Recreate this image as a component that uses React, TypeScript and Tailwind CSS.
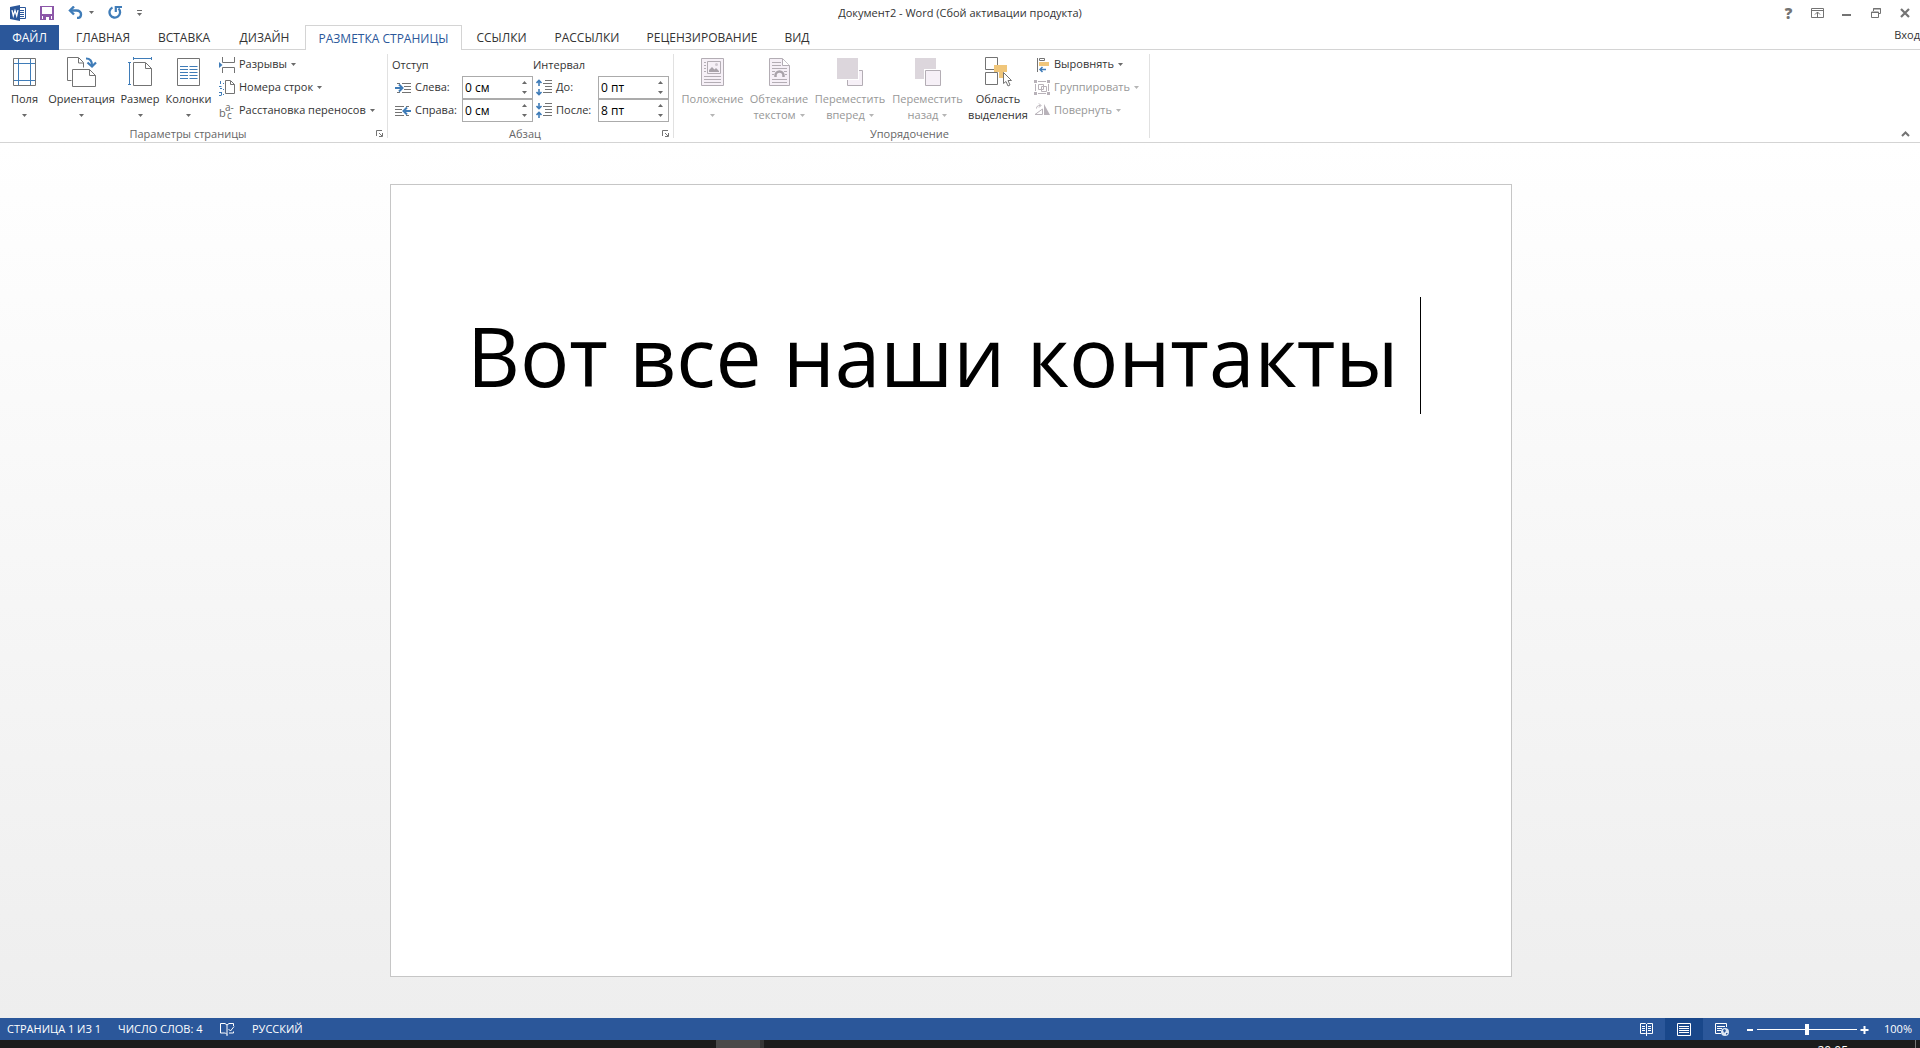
import React from "react";

type P = { children?: React.ReactNode };

const G = "#737373";
const B = "#3f7cb8";

function Svg({ w, h, children }: P & { w: number; h: number }) {
  return (
    <svg width={w} height={h} viewBox={`0 0 ${w} ${h}`} fill="none" aria-hidden="true" className="shrink-0">
      {children}
    </svg>
  );
}

function Caret({ dim = false }: { dim?: boolean }) {
  return (
    <Svg w={5} h={3}>
      <path d="M0 0h5L2.5 3z" fill={dim ? "#b5b5b5" : "#6a6a6a"} />
    </Svg>
  );
}

/* ---------- Quick access and window icons ---------- */

const WordLogo = () => (
  <Svg w={16} h={16}>
    <path d="M9 2.5h6.500v11H9z" fill="#fff" stroke="#2b579a" />
    <path d="M10 5.500h4M10 7.500h4M10 9.500h4M10 11.500h4" stroke="#2b579a" />
    <path d="M0 2l10-2v16L0 14z" fill="#2b579a" />
    <path d="M2 5.200l1.300 5.600L5 5.600l1.700 5.200L8 5.200" stroke="#fff" strokeWidth="1.300" />
  </Svg>
);
const Save = () => (
  <Svg w={14} h={14}>
    <path d="M0 0h14v14H0z" fill="#8c57a8" />
    <path d="M2 1h10v7H2zM2 10h1v3H2zM11 10h1v3h-1zM6 11h3v3H6z" fill="#fff" />
  </Svg>
);
const Undo = () => (
  <Svg w={15} h={13}>
    <path d="M2 4.500h6.500c3 0 4.500 1.600 4.500 3.700S11.500 12 9 12" stroke={B} strokeWidth="2.400" />
    <path d="M6 0.500L2 4.500l4 4" stroke={B} strokeWidth="2.400" />
  </Svg>
);
const Redo = () => (
  <Svg w={14} h={13}>
    <path d="M4.500 1.500A5.300 5.300 0 1 0 10.500 2.500" stroke={B} strokeWidth="2.300" />
    <path d="M7.800 6V1H14" stroke={B} strokeWidth="2.200" />
  </Svg>
);
const Customize = () => (
  <Svg w={5} h={6}>
    <path d="M0 .5h5" stroke="#6a6a6a" />
    <path d="M0 3h5L2.500 6z" fill="#6a6a6a" />
  </Svg>
);
const RibbonOptions = () => (
  <Svg w={13} h={10}>
    <path d="M.5.5h12v9H.5zM1 2.500h11M6.500 9V4M4 6.500L6.500 4 9 6.500" stroke={G} />
  </Svg>
);
const Minimize = () => (
  <Svg w={9} h={10}>
    <path d="M0 7h9" stroke={G} strokeWidth="2" />
  </Svg>
);
const Restore = () => (
  <Svg w={10} h={10}>
    <path d="M2.500 3V.5h7v5H7M2 1h8M.5 4h7v5.500h-7zM0 4.500h8" stroke={G} />
  </Svg>
);
const Close = () => (
  <Svg w={10} h={10}>
    <path d="M1 1l8 8M9 1L1 9" stroke={G} strokeWidth="2.200" />
  </Svg>
);
const Launcher = () => (
  <Svg w={7} h={7}>
    <path d="M.5 6V.5H6M3 3l3 3M6.500 3v3.500H3" stroke={G} />
  </Svg>
);

/* ---------- Large ribbon icons ---------- */

const Margins = () => (
  <Svg w={23} h={30}>
    <path d="M.5 1.500h22v27H.5z" stroke={G} />
    <path d="M5.500 2v26M17.500 2v26M1 6.500h21M1 23.500h21" stroke={B} />
  </Svg>
);
const Orientation = () => (
  <Svg w={30} h={30}>
    <path d="M4.500 23.500h-4V.5h11l5 5v5M11.500 1v5h5" stroke={G} />
    <path d="M5.500 12.500h17l6 6v11h-23z" fill="#fff" stroke={G} />
    <path d="M22.500 12.500v6h6" stroke={G} />
    <path d="M19 1.500c4 0 6 2 6 7" stroke={B} strokeWidth="2.200" />
    <path d="M20.500 5.500L25 9.500l4-4" stroke={B} strokeWidth="2.200" />
  </Svg>
);
const Size = () => (
  <Svg w={24} h={30}>
    <path d="M5.500 5.500h12l6 6v17h-18zM17.500 6v5.500h6" stroke={G} />
    <path d="M5 1.500h19M5.500 0v3M23.500 0v3M1.500 5v23M0 5.500h3M0 27.500h3" stroke={B} />
  </Svg>
);
const Columns = () => (
  <Svg w={23} h={30}>
    <path d="M.5 1.500h22v27H.5z" stroke={G} />
    <path d="M3 9.500h8M3 12.500h8M3 15.500h8M3 18.500h8M3 21.500h8M12.500 9.500h8M12.500 12.500h8M12.500 15.500h8M12.500 18.500h8M12.500 21.500h8" stroke={B} />
  </Svg>
);
const Position = () => (
  <Svg w={23} h={30}>
    <path d="M.5 1.500h22v27H.5z" fill="#f6f0f7" stroke="#b3adb4" />
    <path d="M6.500 4.500h13v12h-13z" stroke="#b3adb4" />
    <path d="M8 15v-2l3-3 2.500 2.500L15 11l3 3v1z" fill="#a9a3aa" />
    <circle cx="15.500" cy="7.500" r="1.500" fill="#cfc8d0" />
    <path d="M3 5.500h2M3 8.500h2M3 11.500h2M3 14.500h2M3 19.500h17M3 22.500h17M3 25.500h17" stroke="#b3adb4" />
  </Svg>
);
const Wrap = () => (
  <Svg w={21} h={30}>
    <path d="M.5 1.500h13l7 7v20H.5z" fill="#f6f0f7" stroke="#b3adb4" />
    <path d="M13.500 2v6.500h7" fill="#fff" stroke="#b3adb4" />
    <path d="M3 5.500h9M3 8.500h9M3 11.500h15M3 14.500h3M15 14.500h3M3 17.500h2M16 17.500h2M3 22.500h15M3 25.500h15" stroke="#b3adb4" />
    <path d="M6.500 20v-1.500a4 4 0 0 1 8 0V20" stroke="#a9a3aa" strokeWidth="2.500" />
  </Svg>
);
const Forward = () => (
  <Svg w={26} h={30}>
    <path d="M10.500 13.500h15v15h-15z" fill="#f6f0f7" stroke="#b3adb4" />
    <path d="M0 1h22v22H0z" fill="#fff" />
    <path d="M0 1h21v21H0z" fill="#dcd6dc" />
  </Svg>
);
const Backward = () => (
  <Svg w={26} h={30}>
    <path d="M0 1h21v21H0z" fill="#dcd6dc" />
    <path d="M9 12h17v17H9z" fill="#fff" />
    <path d="M10.500 13.500h15v15h-15z" fill="#f6f0f7" stroke="#b3adb4" />
  </Svg>
);
const Selection = () => (
  <Svg w={27} h={30}>
    <path d="M.5.5h12v12H.5zM.5 15.500h12v12H.5z" stroke={G} />
    <path d="M9 8h13v7h-3v6h-5v-6H9z" fill="#f0c67a" />
    <path d="M18.500 15.500v11l2.500-2 2 4.500 2-1-2-4.500h3.500z" fill="#fff" stroke={G} />
  </Svg>
);

/* ---------- Small ribbon icons ---------- */

const Breaks = () => (
  <Svg w={16} h={16}>
    <path d="M3.500 0v5.500h12V0M3.500 16v-5.500h12V16" stroke={G} />
    <path d="M0 5l3.500 3L0 11z" fill={B} />
  </Svg>
);
const LineNumbers = () => (
  <Svg w={16} h={16}>
    <path d="M6.500 2v11.500h9v-9l-4-4H6.500V2M11.500 1v3.500h4" stroke={G} />
    <path d="M1.500 1v3M0 6.500h2.500M1 8.500h2M0 12.500h2.500M0 15.500h2.500M2.500 12v3M4 3.500h1M4 9.500h1M4 14.500h1" stroke={B} />
  </Svg>
);
const Hyphenation = () => (
  <span aria-hidden="true" className="flex w-4 shrink-0 text-[#666]">
    <span className="w-[6px] pt-1 leading-3">b</span>
    <span className="flex flex-col text-[10px] leading-[8px]">
      <span>a-</span>
      <span>c</span>
    </span>
  </span>
);
const IndentLeft = () => (
  <Svg w={16} h={12}>
    <path d="M2 1.500h3M7 1.500h9M9 4.500h7M9 7.500h7M2 10.500h3M7 10.500h9" stroke={G} />
    <path d="M0 6h6M4 2.500L7.500 6 4 9.500" stroke={B} strokeWidth="2" />
  </Svg>
);
const IndentRight = () => (
  <Svg w={16} h={12}>
    <path d="M0 1.500h9M11 1.500h3M0 4.500h7M0 7.500h7M0 10.500h9M11 10.500h3" stroke={G} />
    <path d="M16 6h-6M12 2.500L8.500 6l3.500 3.500" stroke={B} strokeWidth="2" />
  </Svg>
);
const SpaceBefore = () => (
  <Svg w={16} h={17}>
    <path d="M9 1.500h7M7 4.500h9M9 7.500h7M9 10.500h7M7 13.500h9" stroke={G} />
    <path d="M3 7V2M.5 4L3 1.500 5.500 4M3 10v5M.5 13L3 15.500 5.500 13" stroke={B} strokeWidth="1.600" />
  </Svg>
);
const SpaceAfter = () => (
  <Svg w={16} h={17}>
    <path d="M9 1.500h7M7 4.500h9M9 7.500h7M9 10.500h7M7 13.500h9" stroke={G} />
    <path d="M3 1v5M.5 4L3 6.500 5.500 4M3 16v-5M.5 13L3 10.500 5.500 13" stroke={B} strokeWidth="1.600" />
  </Svg>
);
const Align = () => (
  <Svg w={16} h={16}>
    <path d="M3.500 1v14M5.500 1.500h5v2h-5z" stroke={G} />
    <path d="M5 5h10v4H5z" fill="#f0c67a" />
    <path d="M6 12.500h6M8.500 10L6 12.500 8.500 15" stroke={B} strokeWidth="1.500" />
  </Svg>
);
const Group = () => (
  <Svg w={16} h={16}>
    <path d="M0 0h3v3H0zM13 0h3v3h-3zM0 12h3v3H0zM13 12h3v3h-3z" fill="#b8b2b9" />
    <path d="M4 1.500h8M4 13.500h8M1.500 4v7M14.500 4v7M4.500 4.500h5v5h-5zM7.500 6.500h5v5h-5z" stroke="#b8b2b9" />
  </Svg>
);
const Rotate = () => (
  <Svg w={16} h={16}>
    <path d="M10 1v11h6z" fill="#b8b2b9" />
    <path d="M8.500 6v5.500H1zM2.500 5.500c0-2 1-3 4-3M5 .5l2 2L5 4.500" stroke="#b8b2b9" />
  </Svg>
);

/* ---------- Ribbon building blocks ---------- */

type BigProps = { icon: React.ReactNode; lines: string[]; width: string; caret?: boolean; disabled?: boolean };

function BigButton({ icon, lines, width, caret = true, disabled = false }: BigProps) {
  const last = lines.length - 1;
  return (
    <button
      type="button"
      disabled={disabled}
      className={`flex flex-col items-center pt-1 ${width} ${disabled ? "text-[#979797]" : "text-[#333]"}`}
    >
      {icon}
      <span className="mt-1 flex flex-col items-center leading-4 whitespace-nowrap">
        {lines.map((l, i) => (
          <span key={l} className="flex h-4 items-center gap-1">
            {l}
            {caret && last > 0 && i === last && <Caret dim={disabled} />}
          </span>
        ))}
        {caret && last === 0 && (
          <span className="flex h-4 items-center">
            <Caret dim={disabled} />
          </span>
        )}
      </span>
    </button>
  );
}

function SmallButton({ icon, label, disabled = false }: { icon: React.ReactNode; label: string; disabled?: boolean }) {
  return (
    <button
      type="button"
      disabled={disabled}
      className={`flex h-[23px] items-center gap-1 whitespace-nowrap ${disabled ? "text-[#979797]" : "text-[#333]"}`}
    >
      {icon}
      {label}
      <Caret dim={disabled} />
    </button>
  );
}

function Field({ id, icon, label, value, labelWidth }: { id: string; icon: React.ReactNode; label: string; value: string; labelWidth: string }) {
  return (
    <div className="flex h-[23px] items-center">
      <label htmlFor={id} className={`flex items-center gap-1 whitespace-nowrap ${labelWidth}`}>
        {icon}
        {label}
      </label>
      <div className="flex h-[23px] w-[71px] items-center border border-[#ababab] bg-white">
        <input id={id} defaultValue={value} className="w-full min-w-0 flex-1 pl-[2px] text-[12px] text-black outline-none" />
        <div className="flex w-4 flex-col items-center gap-[7px]">
          <button type="button" aria-label={`${label} больше`} className="rotate-180">
            <Caret />
          </button>
          <button type="button" aria-label={`${label} меньше`}>
            <Caret />
          </button>
        </div>
      </div>
    </div>
  );
}

function RibbonGroup({ title, launcher = false, width, children }: P & { title: string; launcher?: boolean; width: string }) {
  return (
    <section className={`flex shrink-0 ${width}`}>
      <div className="flex min-w-0 flex-1 flex-col">
        <div className="flex h-[75px] pt-[3px]">{children}</div>
        <div className="flex h-[17px] items-center pr-1">
          <h2 className="flex-1 text-center leading-4 text-[#666]">{title}</h2>
          {launcher && (
            <button type="button" aria-label={`${title}: параметры`}>
              <Launcher />
            </button>
          )}
        </div>
      </div>
      <div className="mt-1 mb-1 w-px bg-[#e1e1e1]" />
    </section>
  );
}

const tabs = [
  { label: "ГЛАВНАЯ", width: "w-[82px]" },
  { label: "ВСТАВКА", width: "w-20" },
  { label: "ДИЗАЙН", width: "w-[81px]" },
  { label: "РАЗМЕТКА СТРАНИЦЫ", width: "w-[157px]", active: true },
  { label: "ССЫЛКИ", width: "w-[79px]" },
  { label: "РАССЫЛКИ", width: "w-[92px]" },
  { label: "РЕЦЕНЗИРОВАНИЕ", width: "w-[138px]" },
  { label: "ВИД", width: "w-[52px]" },
];

const windowButtons = [
  { label: "Справка", icon: <span className="text-[15px] leading-4 font-extrabold">?</span> },
  { label: "Параметры отображения ленты", icon: <RibbonOptions /> },
  { label: "Свернуть", icon: <Minimize /> },
  { label: "Восстановить", icon: <Restore /> },
  { label: "Закрыть", icon: <Close /> },
];

export default function App() {
  return (
    <div className="flex min-h-screen flex-col overflow-hidden bg-white font-['Open_Sans','Noto_Sans',sans-serif] text-[11px] text-[#333]">
      <header className="grid h-[25px] grid-cols-[1fr_auto_1fr] items-center">
        <div className="flex items-center pl-[10px]">
          <WordLogo />
          <button type="button" aria-label="Сохранить" className="ml-[14px]"><Save /></button>
          <button type="button" aria-label="Отменить" className="ml-[14px] flex items-center gap-[6px]"><Undo /><Caret /></button>
          <button type="button" aria-label="Повторить" className="ml-[14px]"><Redo /></button>
          <button type="button" aria-label="Настройка панели" className="ml-[15px]"><Customize /></button>
        </div>
        <h1 className="leading-4">Документ2 - Word (Сбой активации продукта)</h1>
        <div className="flex justify-end pr-px">
          {windowButtons.map((b) => (
            <button key={b.label} type="button" aria-label={b.label} className="flex h-5 w-[29px] items-center justify-center text-[#737373]">
              {b.icon}
            </button>
          ))}
        </div>
      </header>

      <nav className="flex h-[25px] text-[12px]">
        <button type="button" className="w-[59px] bg-[#2b579a] pt-px text-white">ФАЙЛ</button>
        <div className="w-[3px] border-b border-[#d4d4d4]" />
        {tabs.map((t) => (
          <button
            key={t.label}
            type="button"
            className={`pt-[2px] whitespace-nowrap ${t.width} ${
              t.active ? "border border-b-0 border-[#d4d4d4] text-[#2b579a]" : "border-b border-[#d4d4d4]"
            }`}
          >
            {t.label}
          </button>
        ))}
        <div className="flex flex-1 justify-end border-b border-[#d4d4d4]">
          <a href="#signin" className="mt-[2px] text-[11px] leading-4">Вход</a>
        </div>
      </nav>

      <div className="flex h-[93px] border-b border-[#d4d4d4]">
        <RibbonGroup title="Параметры страницы" launcher width="w-[388px]">
          <div className="flex pl-1">
            <BigButton icon={<Margins />} lines={["Поля"]} width="w-[41px]" />
            <BigButton icon={<Orientation />} lines={["Ориентация"]} width="w-[73px]" />
            <BigButton icon={<Size />} lines={["Размер"]} width="w-11" />
            <BigButton icon={<Columns />} lines={["Колонки"]} width="w-[53px]" />
          </div>
          <div className="ml-1 flex flex-col items-start">
            <SmallButton icon={<Breaks />} label="Разрывы" />
            <SmallButton icon={<LineNumbers />} label="Номера строк" />
            <SmallButton icon={<Hyphenation />} label="Расстановка переносов" />
          </div>
        </RibbonGroup>

        <RibbonGroup title="Абзац" launcher width="w-[286px]">
          <div className="pl-1">
            <h3 className="h-[23px] leading-[23px]">Отступ</h3>
            <div className="pl-[3px]">
              <Field id="left" icon={<IndentLeft />} label="Слева:" value="0 см" labelWidth="w-[67px]" />
              <Field id="right" icon={<IndentRight />} label="Справа:" value="0 см" labelWidth="w-[67px]" />
            </div>
          </div>
          <div>
            <h3 className="h-[23px] leading-[23px]">Интервал</h3>
            <div className="pl-[3px]">
              <Field id="before" icon={<SpaceBefore />} label="До:" value="0 пт" labelWidth="w-[62px]" />
              <Field id="after" icon={<SpaceAfter />} label="После:" value="8 пт" labelWidth="w-[62px]" />
            </div>
          </div>
        </RibbonGroup>

        <RibbonGroup title="Упорядочение" width="w-[476px]">
          <div className="flex pl-1">
            <BigButton icon={<Position />} lines={["Положение"]} width="w-[69px]" disabled />
            <BigButton icon={<Wrap />} lines={["Обтекание", "текстом"]} width="w-16" disabled />
            <BigButton icon={<Forward />} lines={["Переместить", "вперед"]} width="w-[78px]" disabled />
            <BigButton icon={<Backward />} lines={["Переместить", "назад"]} width="w-[77px]" disabled />
            <BigButton icon={<Selection />} lines={["Область", "выделения"]} width="w-16" caret={false} />
          </div>
          <div className="ml-1 flex flex-col items-start">
            <SmallButton icon={<Align />} label="Выровнять" />
            <SmallButton icon={<Group />} label="Группировать" disabled />
            <SmallButton icon={<Rotate />} label="Повернуть" disabled />
          </div>
        </RibbonGroup>

        <div className="flex flex-1 items-end justify-end pr-[10px] pb-[5px]">
          <button type="button" aria-label="Свернуть ленту">
            <Svg w={9} h={6}>
              <path d="M1 5l3.500-3.500L8 5" stroke={G} strokeWidth="2" />
            </Svg>
          </button>
        </div>
      </div>

      <main className="flex-1 bg-linear-to-b from-white to-[#eeeeee] pt-[41px] pr-[18px] pb-10">
        <article className="mx-auto flex h-[793px] w-[1122px] items-start border border-[#c6c6c6] bg-white pt-28 pl-[76px]">
          <p className="border-r border-black text-[82px] leading-[117px] whitespace-pre text-black">Вот все наши контакты </p>
        </article>
      </main>

      <footer>
        <div className="flex h-[22px] items-center bg-[#2b579a] leading-4 text-white">
          <span className="w-[111px] pl-[7px] whitespace-nowrap">СТРАНИЦА 1 ИЗ 1</span>
          <span className="w-[102px] pl-[7px] whitespace-nowrap">ЧИСЛО СЛОВ: 4</span>
          <button type="button" aria-label="Правописание" className="ml-[7px]">
            <Svg w={15} h={13}>
              <path d="M7 11.500L5.500 10H.5V.5H5L7 2l2-1.500h4.500V3M7 2v11M9 10h4.500V8.500M8.500 6l2 2L14 3.500" stroke="#fff" />
            </Svg>
          </button>
          <button type="button" className="ml-[17px]">РУССКИЙ</button>
          <div className="ml-auto flex h-full items-center">
            <button type="button" aria-label="Режим чтения" className="flex h-full w-[38px] items-center justify-center">
              <Svg w={13} h={13}>
                <path d="M6.500 1.500L5.500.5H.5v10h5l1 1 1-1h5V.5h-5zM6.500 1v12M2 3.500h3M2 5.500h3M2 7.500h3M8 3.500h3M8 5.500h3M8 7.500h3" stroke="#fff" />
              </Svg>
            </button>
            <button type="button" aria-label="Разметка страницы" className="flex h-full w-[38px] items-center justify-center bg-[#19478a]">
              <Svg w={14} h={13}>
                <path d="M.5.5h13v12H.5zM2 3.500h10M2 5.500h10M2 7.500h10M2 9.500h10" stroke="#fff" />
              </Svg>
            </button>
            <button type="button" aria-label="Веб-документ" className="flex h-full w-[38px] items-center justify-center">
              <Svg w={14} h={13}>
                <path d="M6 10.500H.5V.5h11V4M2 3.500h8M2 5.500h5M2 7.500h4" stroke="#fff" />
                <circle cx="10" cy="9" r="4" fill="#dce6f3" />
                <path d="M8 7l2-1 1 2-2 2zM11 10h2l-2 2z" fill="#2b579a" />
              </Svg>
            </button>
            <button type="button" aria-label="Мельче" className="ml-[6px]">
              <Svg w={7} h={9}><path d="M0 5h6" stroke="#fff" strokeWidth="2" /></Svg>
            </button>
            <input
              type="range"
              aria-label="Масштаб"
              min={0}
              max={100}
              defaultValue={50}
              className="mx-[3px] h-[11px] w-[100px] appearance-none bg-linear-to-r from-white to-white bg-[length:100%_1px] bg-center bg-no-repeat [&::-webkit-slider-thumb]:h-[11px] [&::-webkit-slider-thumb]:w-1 [&::-webkit-slider-thumb]:appearance-none [&::-webkit-slider-thumb]:bg-white"
            />
            <button type="button" aria-label="Крупнее">
              <Svg w={9} h={9}><path d="M.5 5h8M4.500 1v8" stroke="#fff" strokeWidth="2" /></Svg>
            </button>
            <span className="w-[51px] pr-2 text-right">100%</span>
          </div>
        </div>
        <div className="flex h-2 overflow-hidden bg-[#1c1c1c] text-[12px] text-white">
          <div className="ml-[716px] w-11 bg-[#4a4a4a]" />
          <div className="w-1 bg-[#363636]" />
          <span className="mt-[3px] mr-[67px] ml-auto leading-4">20:05</span>
          <div className="mr-1 w-px bg-[#777]" />
        </div>
      </footer>
    </div>
  );
}
